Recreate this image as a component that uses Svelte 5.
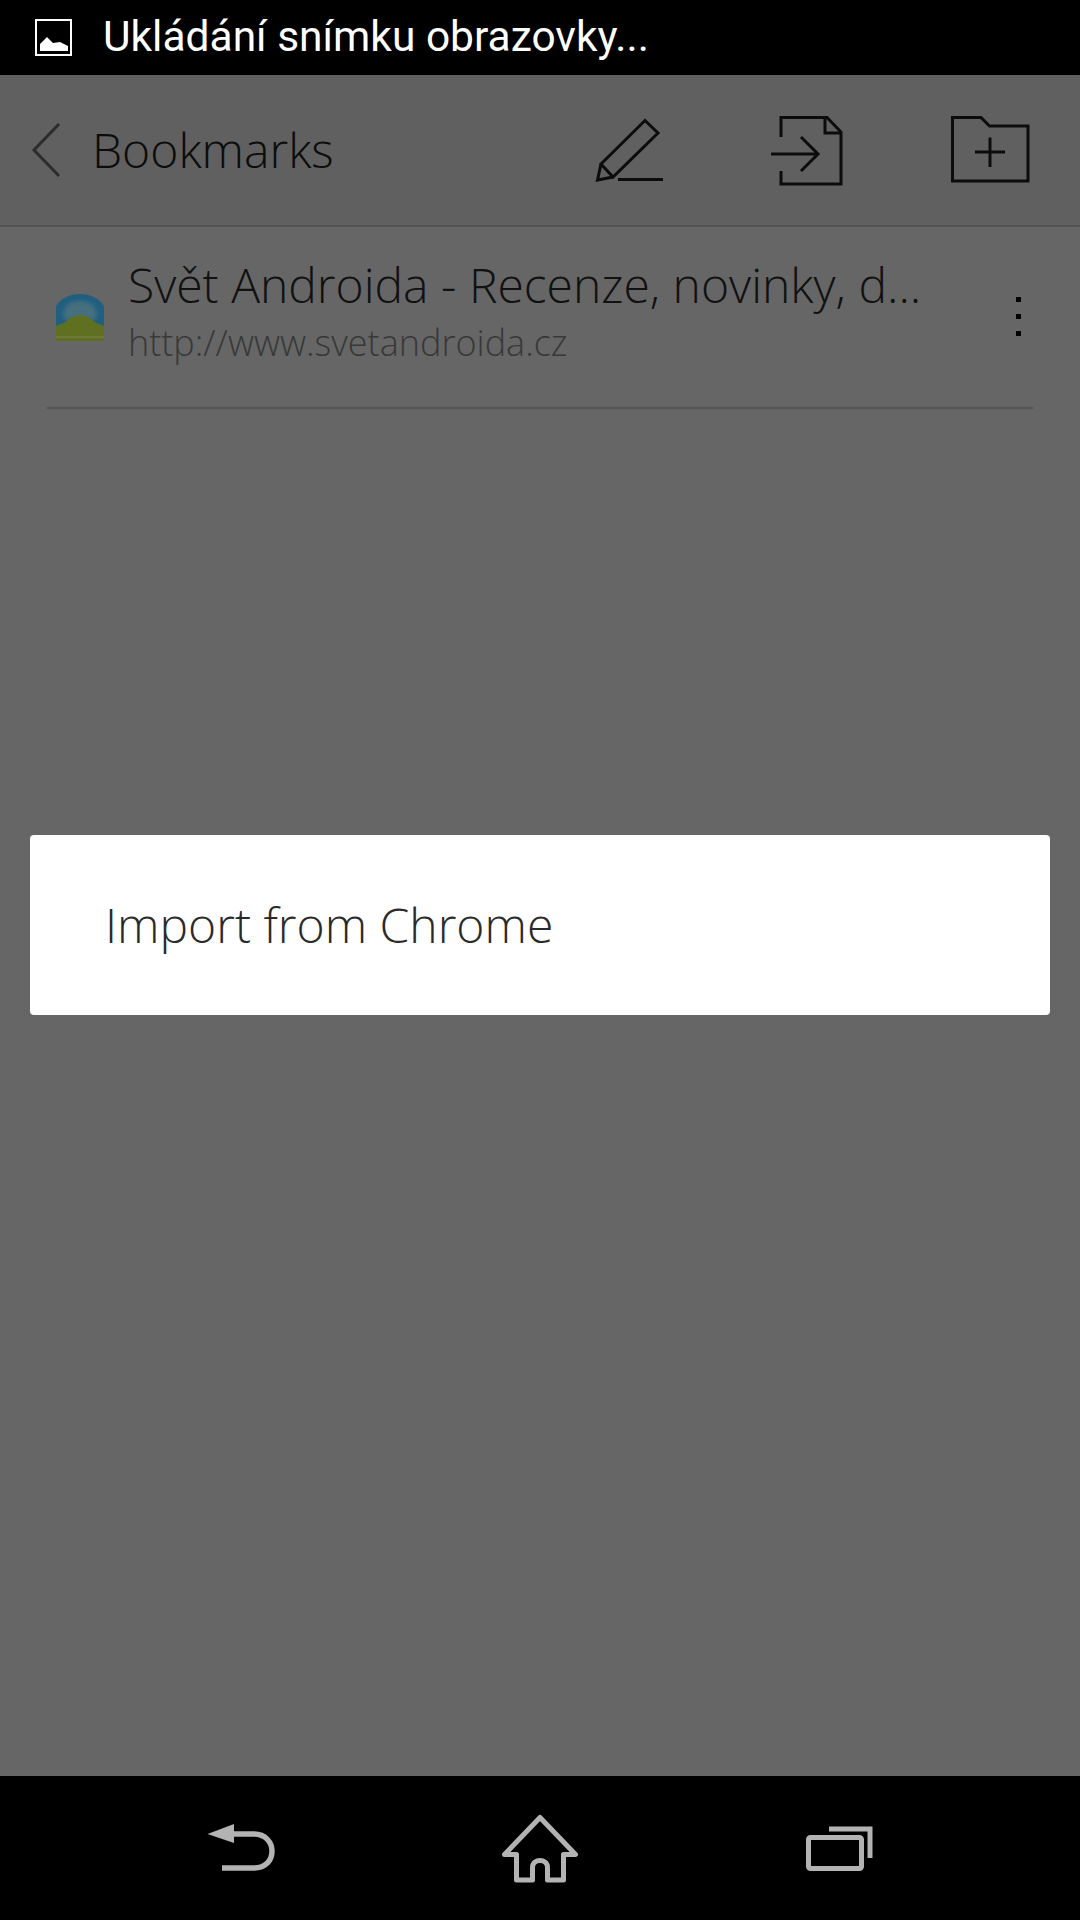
<script lang="ts">
    const title = "Svět Androida - Recenze, novinky, d...";
    const url = "http://www.svetandroida.cz";
</script>

<div class="screen">
    <div class="status">
        <svg class="status-icon" viewBox="0 0 37 37">
            <rect x="1" y="1" width="35" height="35" fill="none" stroke="#fff" stroke-width="2" />
            <path d="M5 32V25L12 18L18 24L25 23L33 27V32Z" fill="#fff" />
        </svg>
        <span>Ukládání snímku obrazovky...</span>
    </div>

    <header>
        <svg class="back" viewBox="0 0 30 56">
            <path d="M28 2L3 28L28 54" fill="none" stroke="#2c2c2c" stroke-width="3" />
        </svg>
        <h1>Bookmarks</h1>
        <svg class="pencil" viewBox="595 115 70 70">
            <g fill="none" stroke="#0c0c0c" stroke-width="3">
                <path d="M645 120.500L658 133L613 177L601 164Z" />
                <path d="M601 164L597.500 180L613 177" />
                <path d="M618 179.500H663" />
            </g>
        </svg>
        <svg class="doc" viewBox="769 114 74 72">
            <g fill="none" stroke="#0c0c0c" stroke-width="3">
                <path d="M781 137V117.500H827L841 132V184H781V171" />
                <path d="M825 118V133H841" />
                <path d="M771 154H818M801 137L818 154L801 171" />
            </g>
        </svg>
        <svg class="folder" viewBox="950 116 80 68">
            <g fill="none" stroke="#0c0c0c" stroke-width="3">
                <path d="M952.500 117.500H981L989.500 126H1028V181H952.500Z" />
                <path d="M975 152H1005M990 137.500V167" />
            </g>
        </svg>
    </header>

    <main>
        <div class="row">
            <svg class="favicon" viewBox="0 0 48 47">
                <defs>
                    <filter id="soft"><feGaussianBlur stdDeviation="2" /></filter>
                </defs>
                <path d="M0 47V12C5 4 14 0 24 0C34 0 43 4 48 12V47Z" fill="#205f80" />
                <path d="M8 26V15C12 9 18 7 24 7C30 7 36 9 40 15V26Z" fill="#46707f" filter="url(#soft)" />
                <path
                    d="M0 47V32C6 30 10 28 13 25C18 20 30 20 35 25C38 28 42 30 48 32V47Z"
                    fill="#5f7020"
                />
                <path d="M0 43H48" stroke="#6b7a3a" stroke-width="2" />
            </svg>
            <div class="text">
                <div class="title">{title}</div>
                <div class="url">{url}</div>
            </div>
            <div class="kebab">
                <i></i>
                <i></i>
                <i></i>
            </div>
        </div>
        <div class="divider"></div>

        <div class="dialog">Import from Chrome</div>
    </main>

    <nav>
        <svg class="nav-back" viewBox="207 1820 70 54">
            <path d="M207.500 1834L234 1824V1843Z" fill="#b3b3b3" />
            <path d="M232 1834H254C266 1834 272 1843 272 1851C272 1860 266 1868 254 1868H222" fill="none" stroke="#b3b3b3" stroke-width="5.500" />
        </svg>
        <svg class="nav-home" viewBox="498 1812 84 73">
            <path
                d="M540 1817.500L575.500 1854.500H563.500V1880H547.500V1867.500C547.500 1858 532.500 1858 532.500 1867.500V1880H516.500V1854.500H504.500Z"
                fill="none"
                stroke="#b3b3b3"
                stroke-width="5"
                stroke-linejoin="round"
            />
        </svg>
        <svg class="nav-recent" viewBox="804 1824 70 50">
            <rect x="808.500" y="1837.500" width="53" height="31" rx="2" fill="none" stroke="#b3b3b3" stroke-width="5" />
            <path d="M829 1829H870V1858" fill="none" stroke="#b3b3b3" stroke-width="5" />
        </svg>
    </nav>
</div>

<style>
    :global(body) {
        background: #000;
    }

    .screen {
        width: 1080px;
        height: 1920px;
        display: flex;
        flex-direction: column;
        background: #666;
        font-family: "Open Sans", sans-serif;
    }

    .status {
        height: 75px;
        flex: none;
        background: #000;
        color: #fff;
        display: flex;
        align-items: center;
        padding-left: 35px;
        font-family: Roboto, sans-serif;
        font-size: 42.500px;
    }

    .status span {
        margin-bottom: 2px;
    }

    .status-icon {
        width: 37px;
        height: 37px;
        margin-right: 31px;
    }

    header {
        height: 150px;
        flex: none;
        background: #606060;
        border-bottom: 2px solid #535353;
        display: flex;
        align-items: center;
    }

    .back {
        width: 30px;
        height: 56px;
        margin-left: 31px;
    }

    h1 {
        margin: 0 0 2px 31px;
        font-size: 48px;
        font-weight: 300;
        color: #0c0c0c;
        width: 503px;
    }

    .pencil {
        width: 70px;
        height: 70px;
    }

    .doc {
        width: 74px;
        height: 72px;
        margin-left: 104px;
    }

    .folder {
        width: 80px;
        height: 68px;
        margin-left: 107px;
    }

    main {
        flex: 1;
        position: relative;
    }

    .row {
        height: 180px;
        display: flex;
        align-items: center;
        padding-left: 56px;
    }

    .favicon {
        width: 48px;
        height: 47px;
        margin-right: 24px;
    }

    .text {
        width: 888px;
        margin-bottom: 10px;
    }

    .title {
        font-size: 48px;
        font-weight: 300;
        line-height: 62px;
        color: #111;
        white-space: nowrap;
    }

    .url {
        font-size: 36px;
        font-weight: 300;
        line-height: 54px;
        color: #383838;
    }

    .kebab {
        display: flex;
        flex-direction: column;
        gap: 12px;
        margin-bottom: 2px;
    }

    .kebab i {
        display: block;
        width: 5px;
        height: 5px;
        background: #000;
    }

    .divider {
        height: 2px;
        margin: 0 47px;
        background: #555;
    }

    .dialog {
        position: absolute;
        top: 608px;
        left: 30px;
        width: 1020px;
        height: 180px;
        box-sizing: border-box;
        padding: 0 0 2px 75px;
        display: flex;
        align-items: center;
        background: #fff;
        border-radius: 4px;
        font-size: 48px;
        font-weight: 300;
        color: #2a2a2a;
    }

    nav {
        height: 144px;
        flex: none;
        background: #000;
        display: flex;
        align-items: flex-start;
    }

    .nav-back {
        width: 70px;
        height: 54px;
        margin: 44px 0 0 207px;
    }

    .nav-home {
        width: 84px;
        height: 73px;
        margin: 36px 0 0 221px;
    }

    .nav-recent {
        width: 70px;
        height: 50px;
        margin: 48px 0 0 222px;
    }
</style>
